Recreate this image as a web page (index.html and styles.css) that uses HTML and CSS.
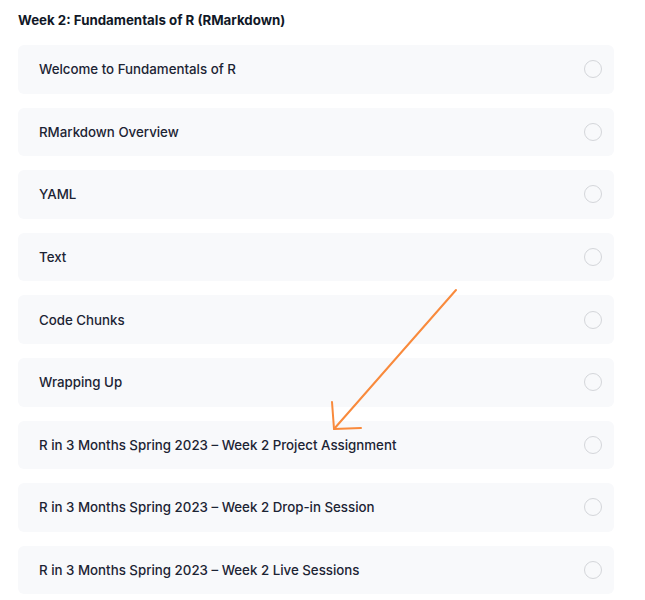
FILE: index.html
```html
<!DOCTYPE html>
<html>
<head>
<meta charset="utf-8">
<link rel="stylesheet" href="styles.css">
</head>
<body>
<div class="page">
  <h2 class="title">Week 2: Fundamentals of R (RMarkdown)</h2>
  <ul class="lessons">
    <li class="lesson"><span>Welcome to Fundamentals of R</span><i class="check"></i></li>
    <li class="lesson"><span>RMarkdown Overview</span><i class="check"></i></li>
    <li class="lesson"><span>YAML</span><i class="check"></i></li>
    <li class="lesson"><span>Text</span><i class="check"></i></li>
    <li class="lesson"><span>Code Chunks</span><i class="check"></i></li>
    <li class="lesson"><span>Wrapping Up</span><i class="check"></i></li>
    <li class="lesson"><span>R in 3 Months Spring 2023 – Week 2 Project Assignment</span><i class="check"></i></li>
    <li class="lesson"><span>R in 3 Months Spring 2023 – Week 2 Drop-in Session</span><i class="check"></i></li>
    <li class="lesson"><span>R in 3 Months Spring 2023 – Week 2 Live Sessions</span><i class="check"></i></li>
  </ul>
  <svg class="arrow" width="645" height="600" viewBox="0 0 645 600">
    <g fill="none" stroke="#f98a3c" stroke-width="2" stroke-linecap="round" stroke-linejoin="round">
      <path d="M456 290 L334 429"/>
      <path d="M332 402 L334 429 L361 428"/>
    </g>
  </svg>
</div>
</body>
</html>
```
FILE: styles.css
```css
html, body {
  margin: 0;
  padding: 0;
  background: #ffffff;
}
body {
  font-family: Inter, "Noto Sans", sans-serif;
  color: #1c2434;
}
.page {
  position: relative;
  width: 645px;
  height: 600px;
  overflow: hidden;
  padding: 0 31px 0 18px;
  box-sizing: border-box;
}
.title {
  margin: 0;
  padding-top: 10px;
  height: 45px;
  box-sizing: border-box;
  font-size: 13.3px;
  font-weight: 700;
  line-height: 20px;
  color: #111827;
}
.lessons {
  list-style: none;
  margin: 0;
  padding: 0;
  display: flex;
  flex-direction: column;
  gap: 14px;
}
.lesson {
  height: 48.6px;
  background: #f8f9fb;
  border-radius: 6px;
  display: flex;
  align-items: center;
  justify-content: space-between;
  padding: 0 12px 0 21px;
  font-size: 13.3px;
  line-height: 20px;
  font-weight: 500;
  color: #1c2434;
}
.check {
  width: 16px;
  height: 16px;
  border: 1.5px solid #d4d6da;
  border-radius: 50%;
  box-sizing: content-box;
}
.arrow {
  position: absolute;
  left: 0;
  top: 0;
  pointer-events: none;
}
```
